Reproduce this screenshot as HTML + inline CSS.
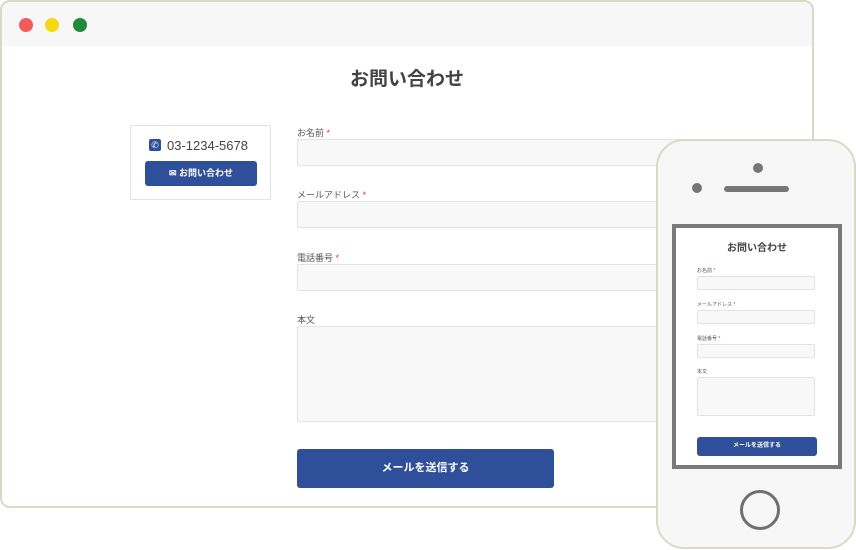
<!DOCTYPE html>
<html><head><meta charset="utf-8"><style>
*{box-sizing:border-box;margin:0;padding:0}
body{width:856px;height:550px;background:#fff;position:relative;overflow:hidden;font-family:"Liberation Sans","Noto Sans CJK JP",sans-serif;color:#444}
.win{position:absolute;left:0;top:0;width:814px;height:508px;border:2px solid #d9d9c6;border-radius:10px;background:#fff;overflow:hidden}
.bar{height:44px;background:#f7f7f7}
.dot{position:absolute;top:16px;width:14px;height:14px;border-radius:50%}
.a{position:absolute}
.lbl{position:absolute;font-size:9px;color:#555}
.lbl b{color:#d33;font-weight:normal}
.fld{position:absolute;background:#f8f8f8;border:1px solid #e3e3e3;border-radius:2px}
.btn{position:absolute;background:#2f4f9a;color:#fff;border-radius:3px;text-align:center;font-weight:bold}
.phone{position:absolute;left:656px;top:139px;width:200px;height:410px;border:2px solid #d9d9c6;border-radius:28px;background:#f7f7f7}
</style></head><body>
<div class="win">
<div class="bar"></div>
<div class="dot" style="left:17px;background:#f55a5a"></div>
<div class="dot" style="left:43px;background:#f5d90e"></div>
<div class="dot" style="left:71px;background:#1e8a3a"></div>
<div class="a" style="left:0;width:810px;top:62px;text-align:center;font-size:19px;font-weight:bold;color:#444">お問い合わせ</div>
<div class="a" style="left:128px;top:123px;width:141px;height:75px;border:1px solid #e2e2e2;border-radius:2px"></div>
<div class="a" style="left:147px;top:137px;width:12px;height:12px;background:#2f4f9a;border-radius:2px;color:#fff;font-size:9px;line-height:12px;text-align:center">✆</div>
<div class="a" style="left:165px;top:136px;font-size:13px;color:#444">03-1234-5678</div>
<div class="btn" style="left:143px;top:159px;width:112px;height:25px;font-size:9px;line-height:25px">✉ お問い合わせ</div>
<div class="lbl" style="left:295px;top:124px">お名前 <b>*</b></div>
<div class="fld" style="left:295px;top:137px;width:420px;height:27px"></div>
<div class="lbl" style="left:295px;top:186px">メールアドレス <b>*</b></div>
<div class="fld" style="left:295px;top:199px;width:420px;height:27px"></div>
<div class="lbl" style="left:295px;top:249px">電話番号 <b>*</b></div>
<div class="fld" style="left:295px;top:262px;width:420px;height:27px"></div>
<div class="lbl" style="left:295px;top:311px">本文</div>
<div class="fld" style="left:295px;top:324px;width:420px;height:96px"></div>
<div class="btn" style="left:295px;top:447px;width:257px;height:39px;font-size:11px;line-height:39px">メールを送信する</div>
</div>
<div class="phone">
<div class="a" style="left:95px;top:22px;width:10px;height:10px;border-radius:50%;background:#777"></div>
<div class="a" style="left:34px;top:42px;width:10px;height:10px;border-radius:50%;background:#777"></div>
<div class="a" style="left:66px;top:45px;width:65px;height:6px;border-radius:3px;background:#777"></div>
<div class="a" style="left:14px;top:83px;width:170px;height:245px;border:4px solid #7a7a7a;background:#fff">
<div class="a" style="left:0;width:162px;top:11px;text-align:center;font-size:10px;font-weight:bold">お問い合わせ</div>
<div class="lbl" style="left:21px;top:39px;font-size:5px">お名前 <b>*</b></div>
<div class="fld" style="left:21px;top:48px;width:118px;height:14px"></div>
<div class="lbl" style="left:21px;top:73px;font-size:5px">メールアドレス <b>*</b></div>
<div class="fld" style="left:21px;top:82px;width:118px;height:14px"></div>
<div class="lbl" style="left:21px;top:107px;font-size:5px">電話番号 <b>*</b></div>
<div class="fld" style="left:21px;top:116px;width:118px;height:14px"></div>
<div class="lbl" style="left:21px;top:140px;font-size:5px">本文</div>
<div class="fld" style="left:21px;top:149px;width:118px;height:39px"></div>
<div class="btn" style="left:21px;top:209px;width:120px;height:19px;font-size:6px;line-height:19px">メールを送信する</div>
</div>
<div class="a" style="left:82px;top:349px;width:40px;height:40px;border-radius:50%;border:3px solid #6f6f6f"></div>
</div>
</body></html>
